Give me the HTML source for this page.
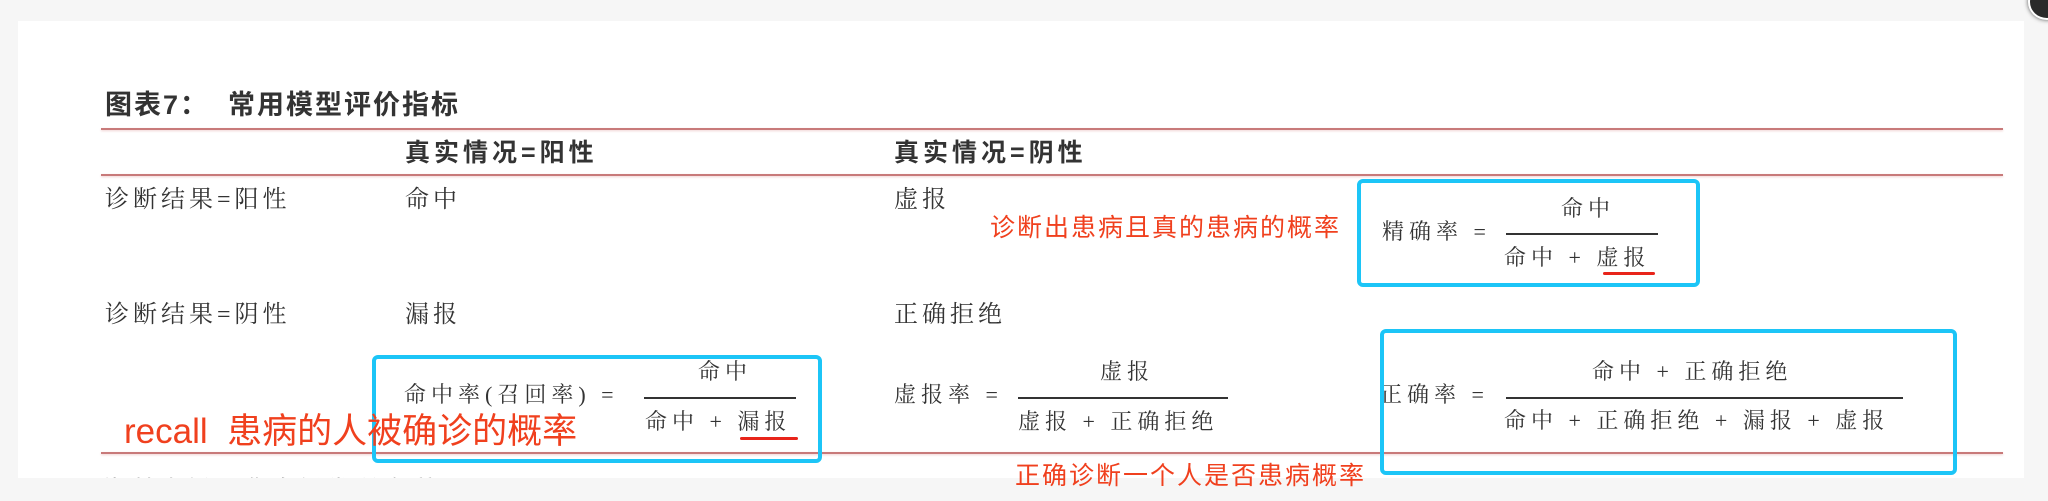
<!DOCTYPE html>
<html><head><meta charset="utf-8"><style>
html,body{margin:0;padding:0}
body{width:2048px;height:501px;background:#f6f6f6;position:relative;overflow:hidden;font-family:"Liberation Serif","Noto Serif CJK SC",serif;color:#333}
#panel{position:absolute;left:18px;top:21px;width:2006px;height:457px;background:#fff;overflow:hidden}
.a{position:absolute;white-space:nowrap;line-height:1}
.line{position:absolute;left:101px;width:1902px;height:2px;background:#c87a7a;box-shadow:0 1px 2px #f0d0d0}
.t{font-size:24px;letter-spacing:4px}
.f{font-size:22px;letter-spacing:5px}
.b{font-weight:bold;font-family:"Liberation Sans","Noto Sans CJK SC",sans-serif}
.box{position:absolute;border:4px solid #1cc5f7;border-radius:6px;box-sizing:border-box}
.red{color:#f0401e;font-family:"Liberation Sans","Noto Sans CJK SC",sans-serif}
.fl{position:absolute;height:2px;background:#333}
.ul{position:absolute;height:3px;background:#e8241a;border-radius:2px}
</style></head><body>
<div id="panel">
<div class="a b" style="left:87px;top:71px;font-size:27px;letter-spacing:2px">图表7：&nbsp;&nbsp;常用模型评价指标</div>
<div class="line" style="top:107px;left:83px"></div>
<div class="a b" style="left:387px;top:120px;font-size:25px;letter-spacing:4px">真实情况=阳性</div>
<div class="a b" style="left:876px;top:120px;font-size:25px;letter-spacing:4px">真实情况=阴性</div>
<div class="line" style="top:153px;left:83px"></div>
<div class="a t" style="left:87px;top:167px">诊断结果=阳性</div>
<div class="a t" style="left:387px;top:167px">命中</div>
<div class="a t" style="left:876px;top:167px">虚报</div>
<div class="a t" style="left:87px;top:282px">诊断结果=阴性</div>
<div class="a t" style="left:387px;top:282px">漏报</div>
<div class="a t" style="left:876px;top:282px">正确拒绝</div>
<div class="line" style="top:431px;left:83px"></div>
<div class="a" style="left:87px;top:457px;font-size:20px;color:#bbb;letter-spacing:8px">资料来源：华泰证券研究所</div>

<!-- recall formula -->
<div class="a f" style="left:386px;top:363px">命中率(召回率) =</div>
<div class="a f" style="left:680px;top:340px">命中</div>
<div class="fl" style="left:626px;top:376px;width:152px"></div>
<div class="a f" style="left:627px;top:390px">命中 + 漏报</div>
<div class="ul" style="left:722px;top:416px;width:58px"></div>

<!-- false alarm -->
<div class="a f" style="left:876px;top:363px">虚报率 =</div>
<div class="a f" style="left:1082px;top:340px">虚报</div>
<div class="fl" style="left:1000px;top:376px;width:210px"></div>
<div class="a f" style="left:1000px;top:390px">虚报 + 正确拒绝</div>

<!-- precision -->
<div class="a f" style="left:1364px;top:200px">精确率 =</div>
<div class="a f" style="left:1543px;top:177px">命中</div>
<div class="fl" style="left:1488px;top:212px;width:152px"></div>
<div class="a f" style="left:1486px;top:226px">命中 + 虚报</div>
<div class="ul" style="left:1585px;top:251px;width:52px"></div>

<!-- accuracy -->
<div class="a f" style="left:1362px;top:363px">正确率 =</div>
<div class="a f" style="left:1574px;top:340px">命中 + 正确拒绝</div>
<div class="fl" style="left:1488px;top:376px;width:397px"></div>
<div class="a f" style="left:1486px;top:389px">命中 + 正确拒绝 + 漏报 + 虚报</div>

<div class="box" style="left:354px;top:334px;width:450px;height:108px"></div>
<div class="box" style="left:1339px;top:158px;width:343px;height:108px"></div>
<div class="box" style="left:1362px;top:308px;width:577px;height:146px"></div>

<div class="a red" style="left:106px;top:393px;font-size:35px">recall&nbsp; 患病的人被确诊的概率</div>
<div class="a red" style="left:972px;top:195px;font-size:25px;letter-spacing:2px">诊断出患病且真的患病的概率</div>
</div>
<div class="a red" style="left:1015px;top:464px;font-size:25px;letter-spacing:2px">正确诊断一个人是否患病概率</div>
<div style="position:absolute;left:2028px;top:-16px;width:34px;height:32px;border-radius:50%;background:#2a2a2a;border:2px solid #fff;box-shadow:0 0 4px #555"></div>
</body></html>
